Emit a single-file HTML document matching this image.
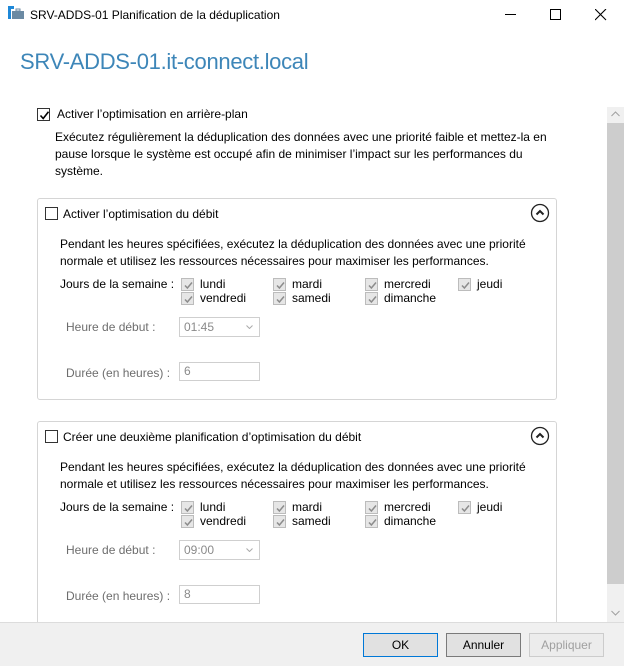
<!DOCTYPE html>
<html><head><meta charset="utf-8"><style>
*{margin:0;padding:0;box-sizing:border-box}
html,body{width:624px;height:666px;overflow:hidden}
body{background:#fff;font-family:"Liberation Sans",sans-serif;font-size:12px;color:#000;position:relative}
.a{position:absolute;white-space:nowrap;line-height:15px}
.cb{position:absolute;width:13px;height:13px;border:1px solid #333;background:#fff}
.dc{position:absolute;width:13px;height:13px;border:1px solid #bcbcbc;background:#e6e6e6}
.dc svg,.cb svg{position:absolute;left:1px;top:1px}
.grp{position:absolute;left:37px;width:520px;border:1px solid #d5d5d5;border-radius:3px}
.inp{position:absolute;width:81px;height:20px;border:1px solid #cfcfcf;color:#8a8a8a;padding:2px 0 0 4px;line-height:15px}
.gray{color:#6d6d6d}
.btn{position:absolute;top:633px;width:75px;height:24px;border:1px solid #adadad;background:#e1e1e1;text-align:center;line-height:22px}
</style></head><body>
<svg style="position:absolute;left:8px;top:6px" width="16" height="14"><rect x="0" y="0" width="6" height="3" fill="#1e88d8"/><rect x="0" y="0" width="3" height="13" fill="#1e88d8"/><rect x="4" y="5" width="12" height="8" fill="#6b8aa3"/><rect x="8" y="3" width="4" height="2" fill="none" stroke="#6b8aa3"/></svg>
<div class="a" style="left:30px;top:8px">SRV-ADDS-01 Planification de la déduplication</div>
<div class="a" style="left:505px;top:14px;width:11px;border-top:1px solid #000"></div>
<div class="a" style="left:550px;top:9px;width:11px;height:11px;border:1px solid #000"></div>
<svg style="position:absolute;left:595px;top:9px" width="12" height="12"><path d="M0 0L11 11M11 0L0 11" stroke="#000" stroke-width="1.1"/></svg>
<div class="a" style="left:20px;top:49px;font-size:22px;line-height:26px;color:#3d86b8;letter-spacing:-0.3px">SRV-ADDS-01.it-connect.local</div>

<div class="a" style="left:607px;top:107px;width:17px;height:515px;background:#f0f0f0"></div>
<div class="a" style="left:607px;top:123px;width:17px;height:461px;background:#cdcdcd"></div>
<svg style="position:absolute;left:611px;top:111px" width="9" height="6"><path d="M0.5 5L4.5 1L8.5 5" stroke="#a0a0a0" fill="none"/></svg>
<svg style="position:absolute;left:611px;top:610px" width="9" height="6"><path d="M0.5 1L4.5 5L8.5 1" stroke="#a0a0a0" fill="none"/></svg>

<div class="cb" style="left:37px;top:108px"><svg width="11" height="11"><path d="M1.5 5.5L4.2 8.5L9.5 1.8" stroke="#000" stroke-width="1.6" fill="none"/></svg></div>
<div class="a" style="left:57px;top:107px">Activer l’optimisation en arrière-plan</div>
<div class="a" style="left:55px;top:129px;line-height:17px">Exécutez régulièrement la déduplication des données avec une priorité faible et mettez-la en<br>pause lorsque le système est occupé afin de minimiser l’impact sur les performances du<br>système.</div>

<div class="grp" style="top:198px;height:202px"></div>
<div class="cb" style="left:45px;top:207px"></div>
<div class="a" style="left:63px;top:207px">Activer l’optimisation du débit</div>
<svg style="position:absolute;left:530px;top:203px" width="20" height="20"><circle cx="10" cy="10" r="8.5" stroke="#222" stroke-width="1.3" fill="none"/><path d="M6.5 11.5L10 8L13.5 11.5" stroke="#222" stroke-width="2" fill="none"/></svg>
<div class="a" style="left:60px;top:236px;line-height:17px">Pendant les heures spécifiées, exécutez la déduplication des données avec une priorité<br>normale et utilisez les ressources nécessaires pour maximiser les performances.</div>
<div class="a" style="left:60px;top:277px">Jours de la semaine :</div>

<div class="grp" style="top:421px;height:210px"></div>
<div class="cb" style="left:45px;top:430px"></div>
<div class="a" style="left:63px;top:430px">Créer une deuxième planification d’optimisation du débit</div>
<svg style="position:absolute;left:530px;top:426px" width="20" height="20"><circle cx="10" cy="10" r="8.5" stroke="#222" stroke-width="1.3" fill="none"/><path d="M6.5 11.5L10 8L13.5 11.5" stroke="#222" stroke-width="2" fill="none"/></svg>
<div class="a" style="left:60px;top:459px;line-height:17px">Pendant les heures spécifiées, exécutez la déduplication des données avec une priorité<br>normale et utilisez les ressources nécessaires pour maximiser les performances.</div>
<div class="a" style="left:60px;top:500px">Jours de la semaine :</div>

<div id="days"></div>

<div class="a gray" style="left:66px;top:320px">Heure de début :</div>
<div class="inp" style="left:179px;top:317px">01:45</div>
<svg style="position:absolute;left:246px;top:325px" width="7" height="4"><path d="M0.5 0.5L3.5 3.5L6.5 0.5" stroke="#aaa" fill="none"/></svg>
<div class="a gray" style="left:66px;top:366px">Durée (en heures) :</div>
<div class="inp" style="left:179px;top:362px;height:19px;padding-top:1px">6</div>

<div class="a gray" style="left:66px;top:543px">Heure de début :</div>
<div class="inp" style="left:179px;top:540px">09:00</div>
<svg style="position:absolute;left:246px;top:548px" width="7" height="4"><path d="M0.5 0.5L3.5 3.5L6.5 0.5" stroke="#aaa" fill="none"/></svg>
<div class="a gray" style="left:66px;top:589px">Durée (en heures) :</div>
<div class="inp" style="left:179px;top:585px;height:19px;padding-top:1px">8</div>

<div class="a" style="left:0;top:622px;width:624px;height:44px;background:#f0f0f0;border-top:1px solid #dcdcdc"></div>
<div class="btn" style="left:363px;border:1px solid #0078d7">OK</div>
<div class="btn" style="left:446px;border-color:#7a7a7a">Annuler</div>
<div class="btn" style="left:529px;background:#ececec;border-color:#cccccc;color:#a0a0a0">Appliquer</div>

<script>
var d=document.getElementById('days'),h='';
var cols=[[181,'lundi','vendredi'],[273,'mardi','samedi'],[365,'mercredi','dimanche'],[458,'jeudi',null]];
[278,501].forEach(function(y){cols.forEach(function(c){
[c[1],c[2]].forEach(function(t,i){if(!t)return;var yy=y+i*14;
h+='<div class="dc" style="left:'+c[0]+'px;top:'+yy+'px"><svg width="11" height="11"><path d="M2 5.5L4.4 8L9 2.5" stroke="#8c8c8c" stroke-width="1.5" fill="none"/></svg></div>';
h+='<div class="a" style="left:'+(c[0]+19)+'px;top:'+(yy-1)+'px">'+t+'</div>';});});});
d.innerHTML=h;
</script>
</body></html>
